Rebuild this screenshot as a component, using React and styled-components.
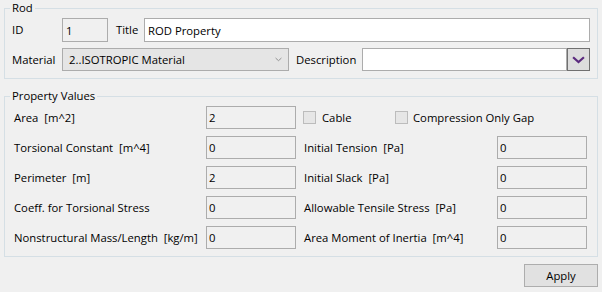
import React from "react";
import styled, { createGlobalStyle } from "styled-components";

const GlobalStyle = createGlobalStyle`
  html, body {
    margin: 0;
    padding: 0;
    background: #f0f0f0;
  }
  body {
    font-family: "Open Sans", "Noto Sans", sans-serif;
    font-size: 11.3px;
    color: #000;
  }
  * {
    box-sizing: border-box;
  }
`;

const Page = styled.div`
  width: 602px;
  height: 292px;
  padding: 1px 4px 0;
  background: #f0f0f0;
  overflow: hidden;
`;

const Group = styled.fieldset`
  margin: ${(p) => (p.$first ? "0" : "10px 0 0")};
  padding: 3px 7px 7px 7px;
  border: 1px solid #d5dfe5;
  border-radius: 0;
  min-width: 0;
`;

const Legend = styled.legend`
  margin-left: -2px;
  padding: 0 2px;
  font-size: 11.3px;
  line-height: 14px;
`;

const Row = styled.div`
  display: flex;
  align-items: center;
  height: ${(p) => p.$h || 23}px;
  margin-top: ${(p) => p.$mt || 0}px;
`;

const Label = styled.span`
  flex: none;
  width: ${(p) => p.$w}px;
  white-space: pre;
  font-size: 11.3px;
  line-height: 16px;
`;

const Box = styled.input`
  flex: ${(p) => (p.$w ? "none" : "1")};
  width: ${(p) => (p.$w ? `${p.$w}px` : "auto")};
  min-width: 0;
  height: ${(p) => p.$h || 23}px;
  margin: 0;
  padding: 0 ${(p) => p.$pad ?? 2}px;
  border: 1px solid #acacac;
  background: ${(p) => (p.$white ? "#fff" : "#f0f0f0")};
  font-family: "Open Sans", "Noto Sans", sans-serif;
  font-size: 11.3px;
  color: #000;
  outline: none;
`;

const Select = styled.div`
  flex: none;
  width: 227px;
  height: 23px;
  display: flex;
  align-items: center;
  justify-content: space-between;
  padding: 0 6px;
  border: 1px solid #acacac;
  background: #e5e5e5;
  font-size: 11.3px;
`;

const DropButton = styled.div`
  flex: none;
  width: 23px;
  height: 23px;
  display: flex;
  align-items: center;
  justify-content: center;
  border: 1px solid #707070;
  background: #dddddd;
`;

const Field = styled.div`
  display: flex;
  align-items: center;
  width: 284px;
  & + & {
    margin-left: 7px;
  }
`;

const Check = styled.span`
  flex: none;
  width: 13px;
  height: 13px;
  border: 1px solid #bcbcbc;
  background: #e6e6e6;
  margin-right: 6px;
`;

const CheckItem = styled.div`
  display: flex;
  align-items: center;
  width: ${(p) => p.$w}px;
  font-size: 11.3px;
`;

const Footer = styled.div`
  display: flex;
  justify-content: flex-end;
  margin-top: 7px;
`;

const Button = styled.button`
  width: 74px;
  height: 23px;
  margin: 0;
  padding: 0;
  border: 1px solid #adadad;
  background: #e1e1e1;
  font-family: "Open Sans", "Noto Sans", sans-serif;
  font-size: 11.3px;
  color: #000;
`;

const Chevron = ({ color, w, h, sw }) => (
  <svg width={w} height={h} viewBox="0 0 12 7">
    <path d="M1 1 L6 5.5 L11 1" fill="none" stroke={color} strokeWidth={sw} />
  </svg>
);

const rows = [
  ["Area  [m^2]", "2", null, null],
  ["Torsional Constant  [m^4]", "0", "Initial Tension  [Pa]", "0"],
  ["Perimeter  [m]", "2", "Initial Slack  [Pa]", "0"],
  ["Coeff. for Torsional Stress", "0", "Allowable Tensile Stress  [Pa]", "0"],
  ["Nonstructural Mass/Length  [kg/m]", "0", "Area Moment of Inertia  [m^4]", "0"],
];

const App = () => {
  return (
    <Page>
      <GlobalStyle />
      <Group $first>
        <Legend>Rod</Legend>
        <Row $h={24}>
          <Label $w={50}>ID</Label>
          <Box $w={46} $h={24} $pad={3} defaultValue="1" readOnly />
          <Label $w={36} style={{ paddingLeft: 8 }}>Title</Label>
          <Box $white $h={24} $pad={3} defaultValue="ROD Property" readOnly />
        </Row>
        <Row $mt={6}>
          <Label $w={50}>Material</Label>
          <Select>
            <span>2..ISOTROPIC Material</span>
            <Chevron color="#808080" w={7} h={5} sw={1.4} />
          </Select>
          <Label $w={73} style={{ paddingLeft: 7 }}>Description</Label>
          <Box $white defaultValue="" readOnly />
          <DropButton>
            <Chevron color="#5b2a7e" w={13} h={8} sw={2} />
          </DropButton>
        </Row>
      </Group>

      <Group>
        <Legend>Property Values</Legend>
        {rows.map(([l, v, rl, rv], i) => (
          <Row key={l} $mt={i ? 7 : 0}>
            <Field>
              <Label $w={194} style={{ paddingLeft: 2 }}>{l}</Label>
              <Box $w={90} defaultValue={v} readOnly />
            </Field>
            <Field>
              {rl ? (
                <>
                  <Label $w={194} style={{ paddingLeft: 1 }}>{rl}</Label>
                  <Box $w={90} defaultValue={rv} readOnly />
                </>
              ) : (
                <>
                  <CheckItem $w={92}>
                    <Check />
                    Cable
                  </CheckItem>
                  <CheckItem $w={190}>
                    <Check style={{ marginRight: 5 }} />
                    Compression Only Gap
                  </CheckItem>
                </>
              )}
            </Field>
          </Row>
        ))}
      </Group>

      <Footer>
        <Button>Apply</Button>
      </Footer>
    </Page>
  );
};

export default App;
